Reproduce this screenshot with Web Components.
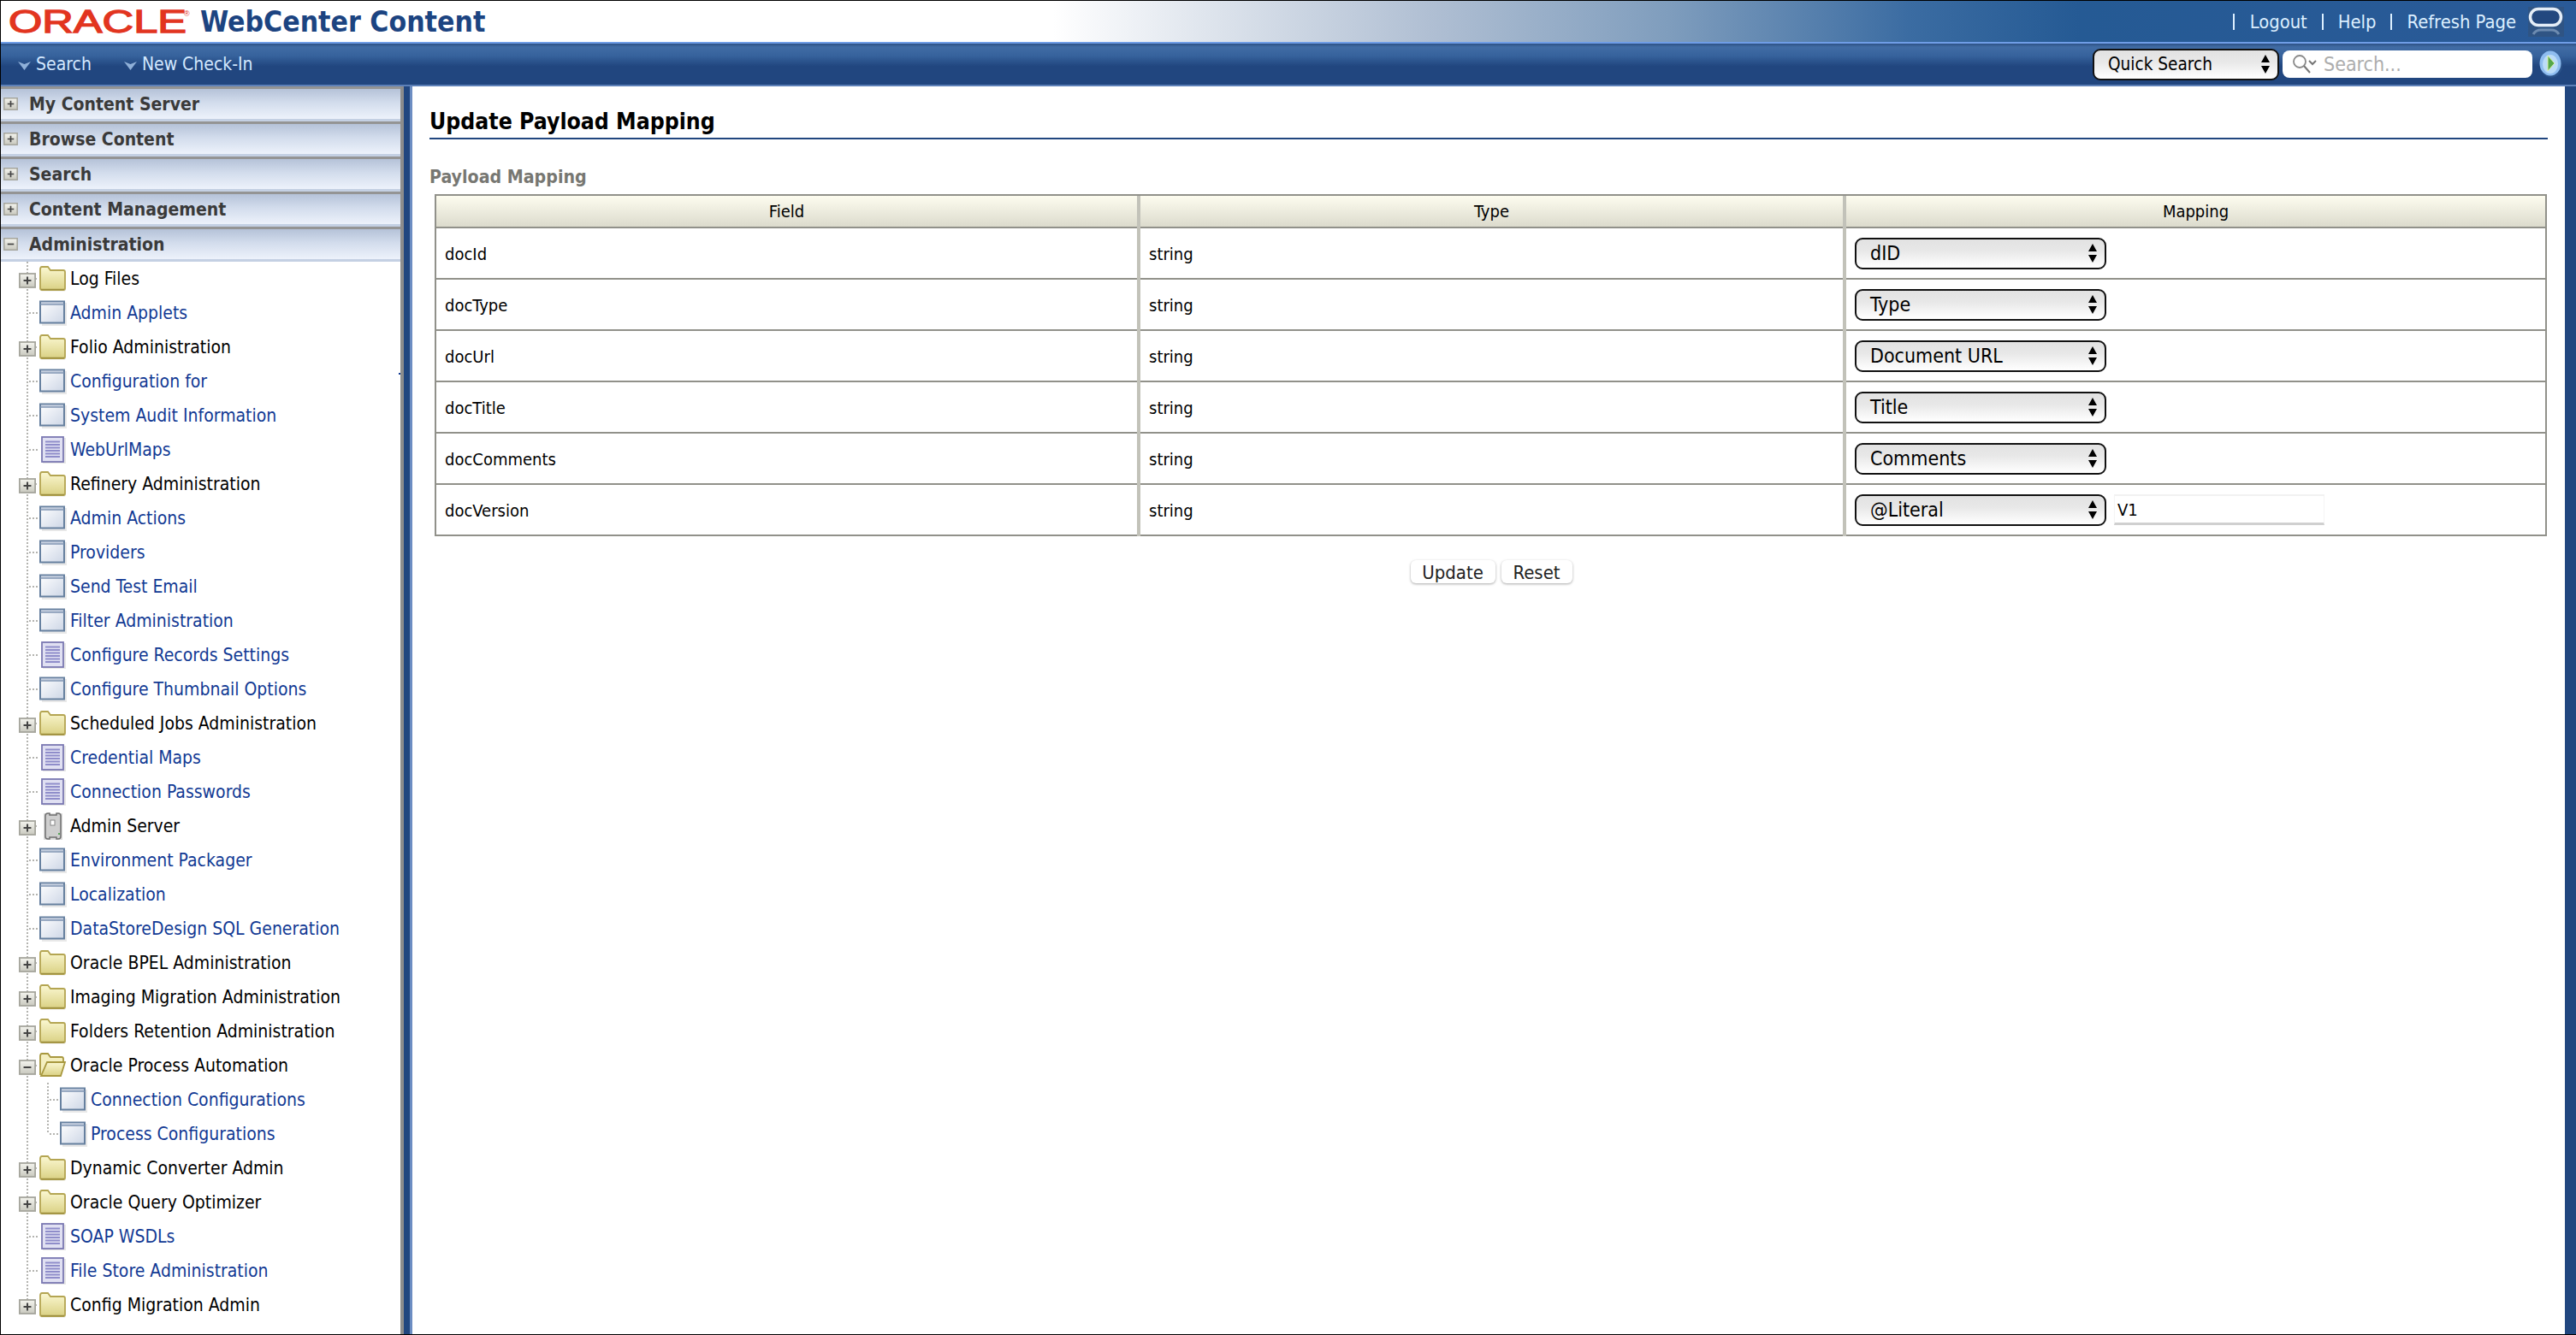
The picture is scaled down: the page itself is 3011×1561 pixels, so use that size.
<!DOCTYPE html>
<html><head><meta charset="utf-8">
<style>
html,body{margin:0;padding:0;height:100%;overflow:hidden;background:#fff}
body{font-family:"DejaVu Sans",sans-serif;font-stretch:condensed}
</style></head>
<body>
<wc-app>
  <wc-topbar slot="top"></wc-topbar>
  <wc-navbar slot="top"></wc-navbar>
  <wc-sidebar slot="side"></wc-sidebar>
  <wc-content slot="main"></wc-content>
</wc-app>
<script>
const FONT='"DejaVu Sans",sans-serif';
function def(name,css,html,setup){
  customElements.define(name,class extends HTMLElement{
    connectedCallback(){
      if(this.shadowRoot)return;
      const r=this.attachShadow({mode:'open'});
      const h=typeof html==='function'?html(this):html;
      r.innerHTML='<style>'+css+'</style>'+h;
      if(setup)setup(r,this);
    }
  });
}
/* App frame */
def('wc-app',`
:host{display:flex;flex-direction:column;height:1561px;box-sizing:border-box;border-top:1px solid #000;border-bottom:1px solid #000;border-left:1px solid #000;background:#21467f;overflow:hidden}
.main{flex:1;display:flex;min-height:0;border-top:2px solid #5d80b8;background:#21467f}
.side{width:471px;flex:none;display:flex}
.main ::slotted([slot=side]){flex:1}
.m{flex:1;margin-left:7px;margin-right:13px;border-left:3px solid #6c8dc2;background:#fff;min-width:0;display:flex}
`,`<slot name="top"></slot><div class="main"><div class="side"><slot name="side"></slot></div><div class="m"><slot name="main"></slot></div></div>`);

/* Top bar */
def('wc-topbar',`
:host{display:flex;align-items:center;height:48px;box-sizing:border-box;background:linear-gradient(90deg,#fff 0,#fff 1230px,#e4e9f0 1380px,#b0bfd3 1670px,#7f9dbd 1950px,#3b6ca2 2230px,#255a94 2430px,#2a5a98 100%);padding-left:8px;flex:none;position:relative}
:host::after{content:"";position:absolute;left:0;right:0;bottom:-2px;height:2px;background:#6f9de6}
svg.o{display:block;width:216px;height:40px;flex:none;overflow:visible}
.t{font:700 33.5px ${FONT};font-stretch:condensed;color:#1c4481;margin-left:9px;margin-top:2px;white-space:nowrap;line-height:1}
.sp{flex:1}
.l{display:flex;align-items:center;font:21.8px ${FONT};font-stretch:condensed;color:#dcefff;white-space:nowrap}
.l i{display:block;width:2px;height:19px;background:#dcefff}
.l span{display:block}
.ic{display:block;width:42px;height:35px;margin:0 14px 0 14px;flex:none}
`,`<svg class="o" viewBox="0 0 216 40"><text x="1" y="33" font-family="Liberation Sans" font-size="37" fill="#e2351f" stroke="#e2351f" stroke-width="1.300" textLength="208" lengthAdjust="spacingAndGlyphs">ORACLE</text><text x="206" y="14" font-family="Liberation Sans" font-size="9" fill="#e2351f">®</text></svg>
<div class="t">WebCenter Content</div><div class="sp"></div>
<div class="l"><i></i><span style="margin-left:18px">Logout</span><i style="margin-left:17px"></i><span style="margin-left:17px">Help</span><i style="margin-left:17px"></i><span style="margin-left:17px">Refresh Page</span></div>
<svg class="ic" viewBox="0 0 42 35"><rect width="42" height="35" fill="#2f5484"/><rect x="2.500" y="2.500" width="36" height="19" rx="9.500" fill="#23487f" stroke="#e4edf7" stroke-width="3.500"/><path d="M6 32q3-5 9-5h12q6 0 9 5" fill="none" stroke="#6d8bb0" stroke-width="3"/></svg>`);

/* Nav */
def('wc-navitem',`:host{display:flex;align-items:center;color:#d3e8ff;font-size:21px;white-space:nowrap}
svg{width:15px;height:10px;margin-right:6px;margin-top:3px}`,`<svg viewBox="0 0 15 10"><path d="M0 0L7.500 10L15 0L7.500 3Z" fill="#8fb0d8"/></svg><slot></slot>`);
def('wc-selectbox',`
:host{display:flex;align-items:center;box-sizing:border-box;height:37px;border:2px solid #111;border-radius:9px;background:linear-gradient(#e2e2e2,#e8e8e8 40%,#fff);color:#000;font-size:23px;padding:0 8px 0 16px;justify-content:space-between;white-space:nowrap;flex:none}
svg{width:12px;height:24px;flex:none}`,`<span><slot></slot></span><svg viewBox="0 0 12 24"><path d="M6 1L11 10H1ZM6 23L1 14H11Z" fill="#000"/></svg>`);
def('wc-searchbox',`
:host{display:flex;align-items:center;box-sizing:border-box;height:32px;width:292px;background:#fff;border-radius:8px;color:#adadad;font-size:23px;padding-left:11px;white-space:nowrap;flex:none}
svg{width:30px;height:24px;margin-right:7px;flex:none}`,`<svg viewBox="0 0 30 24"><circle cx="9" cy="9" r="7" fill="none" stroke="#8a8a8a" stroke-width="1.800"/><path d="M14 14l7 8" stroke="#777" stroke-width="2"/><path d="M20 8l4 4 4-4" fill="none" stroke="#777" stroke-width="2"/></svg><slot></slot>`);
def('wc-navbar',`
:host{display:flex;align-items:center;height:48px;margin-top:2px;flex:none;background:linear-gradient(#2d5185 0,#416ca5 4px,#36629c 30%,#21467f 55%,#21467f);padding-left:20px;box-sizing:border-box}
.sp{flex:1}
wc-selectbox{width:218px;height:37px;font-size:20.6px;padding:0 8px 0 16px}
wc-searchbox{margin-left:4px}
svg{display:block;width:30px;height:36px;margin:2px 14px 0 7px;flex:none}
`,`<wc-navitem>Search</wc-navitem><wc-navitem style="margin-left:38px">New Check-In</wc-navitem><div class="sp"></div>
<wc-selectbox>Quick Search</wc-selectbox><wc-searchbox>Search...</wc-searchbox>
<svg viewBox="0 0 30 36"><ellipse cx="15" cy="18" rx="13" ry="15" fill="#2b5288"/><ellipse cx="14" cy="16" rx="12.500" ry="14.500" fill="#8fbdf0"/><ellipse cx="14" cy="17" rx="9" ry="11" fill="#bcdcf8"/><path d="M11 7L19 16L11 25Z" fill="#55a84a" stroke="#dff0b0"/></svg>`);

/* Sidebar */
const boxSvg=(k,w,h)=>`<svg width="${w}" height="${h}" viewBox="0 0 18 16" style="display:block;flex:none"><defs><linearGradient id="bx" x1="0" y1="0" x2="0" y2="1"><stop offset="0" stop-color="#f4f4ee"/><stop offset="1" stop-color="#c9c9bf"/></linearGradient></defs><rect x=".8" y=".8" width="16.400" height="14.400" fill="url(#bx)" stroke="#a5a59c" stroke-width="1.600"/><path d="${k==='minus'?'M5 8H13':'M5 8H13M9 4V12'}" stroke="#444" stroke-width="1.800"/></svg>`;
def('wc-panelhead',`
:host{display:flex;align-items:center;height:41px;box-sizing:border-box;border-top:3px solid #949494;border-bottom:3px solid #c4d0e3;background:linear-gradient(#b5c2d8,#d2dcec 45%,#edf2fb);color:#3a3a3a;font-weight:700;font-size:21px;padding-left:3px;white-space:nowrap}
span{margin-left:13px}`,
h=>boxSvg(h.getAttribute('k')||'plus',17,15)+`<span><slot></slot></span>`);

const icons={
folder:`<svg width="32" height="32" viewBox="0 0 32 32"><defs><linearGradient id="f" x1="0" y1="0" x2="0" y2="1"><stop offset="0" stop-color="#fbf8d2"/><stop offset="1" stop-color="#dad184"/></linearGradient></defs><path d="M2 30.500h28l1-1.500v-21h-2z" fill="#d5d5cf" opacity=".5"/><path d="M1 5q0-3 2-3h7l3 4h15q2 0 2 2v19q0 2-2 2H3q-2 0-2-2z" fill="url(#f)" stroke="#b4a552" stroke-width="1.800"/><path d="M2 28.500h27" stroke="#9c8e3f" stroke-width="1.500"/></svg>`,
open:`<svg width="32" height="32" viewBox="0 0 32 32"><defs><linearGradient id="g" x1="0" y1="0" x2="0" y2="1"><stop offset="0" stop-color="#fbf8d2"/><stop offset="1" stop-color="#dad184"/></linearGradient></defs><path d="M1 27V5q0-3 2-3h7l3 4h13q2 0 2 2v4" fill="#f4efc0" stroke="#a8983f" stroke-width="1.800"/><path d="M2 28L9 12h21L25 28z" fill="url(#g)" stroke="#a8983f" stroke-width="1.800"/></svg>`,
page:`<svg width="32" height="32" viewBox="0 0 32 32"><defs><linearGradient id="p" x1="0" y1="0" x2="1" y2="1"><stop offset="0" stop-color="#fff"/><stop offset="1" stop-color="#cdd6e6"/></linearGradient></defs><rect x="3" y="4" width="29" height="27" fill="#d9d9d9" opacity=".6"/><rect x="1" y="2.500" width="28" height="25" fill="url(#p)" stroke="#66809f" stroke-width="2"/><path d="M1 6H29" stroke="#7d92b0" stroke-width="1.500"/><path d="M2 4H28" stroke="#b4c1d4" stroke-width="1.500"/></svg>`,
doc:`<svg width="32" height="32" viewBox="0 0 32 32"><rect x="4" y="2" width="27" height="30" fill="#d5d5d5" opacity=".6"/><rect x="3" y="1" width="25" height="29" fill="#e0e0f2" stroke="#7a78b2" stroke-width="1.800"/><path d="M7 6.500H24M7 10H24M7 13.500H24M7 17H24M7 20.500H24M7 24H24" stroke="#8f8dca" stroke-width="2"/></svg>`,
server:`<svg width="32" height="34" viewBox="0 0 32 34"><rect x="5" y="2" width="22" height="31" fill="#ddd"/><path d="M7 5q0-3 3-3h2v2h8V2h2q3 0 3 3v24q0 3-3 3h-2v-2h-8v2h-2q-3 0-3-3z" fill="#cfcfcf" stroke="#6f6f6f" stroke-width="1.500"/><rect x="13" y="10" width="5" height="6" fill="#fff" stroke="#888"/><rect x="22" y="25" width="2" height="2" fill="#5aa85a"/></svg>`
};
const D='stroke="#b4b4b0" stroke-width="2" stroke-dasharray="2 2"';
def('wc-treerow',`
:host{display:flex;align-items:center;height:40px;font-size:21px;white-space:nowrap;color:#000;position:relative}
:host([link]){color:#123a94}
.c{display:block;flex:none}
.i{display:flex;width:32px;height:32px;flex:none;margin-left:1px;align-items:center}
.t{margin-left:4px}
.b{position:absolute;left:21px;top:13px}
.dot{position:absolute;left:465px;top:10px;width:2px;height:2px;background:#123a94}
`,h=>{
  const lvl=+(h.getAttribute('level')||1), x=h.getAttribute('box'), last=h.hasAttribute('last'), sl=h.hasAttribute('sub-last');
  let c='';
  c+=`<line x1="31" y1="0" x2="31" y2="${last?20:40}" ${D}/>`;
  if(lvl===1){ if(!x) c+=`<line x1="33" y1="20" x2="44" y2="20" ${D}/>`; else c+=`<line x1="40" y1="20" x2="45" y2="20" ${D}/>`; }
  else { c+=`<line x1="55" y1="0" x2="55" y2="${sl?20:40}" ${D}/><line x1="57" y1="20" x2="68" y2="20" ${D}/>`; }
  const W=lvl===1?44:68;
  return `<svg class="c" width="${W}" height="40">${c}</svg>`+(x?`<div class="b">${boxSvg(x,20,18)}</div>`:'')+`<div class="i">${icons[h.getAttribute('k')]}</div><div class="t"><slot></slot></div>`+(h.hasAttribute('dot')?'<div class="dot"></div>':'');
});
const tree=[
['folder','Log Files','plus'],['page','Admin Applets'],['folder','Folio Administration','plus'],['page','Configuration for',null,'dot'],['page','System Audit Information'],['doc','WebUrlMaps'],['folder','Refinery Administration','plus'],['page','Admin Actions'],['page','Providers'],['page','Send Test Email'],['page','Filter Administration'],['doc','Configure Records Settings'],['page','Configure Thumbnail Options'],['folder','Scheduled Jobs Administration','plus'],['doc','Credential Maps'],['doc','Connection Passwords'],['server','Admin Server','plus'],['page','Environment Packager'],['page','Localization'],['page','DataStoreDesign SQL Generation'],['folder','Oracle BPEL Administration','plus'],['folder','Imaging Migration Administration','plus'],['folder','Folders Retention Administration','plus'],['open','Oracle Process Automation','minus'],['page','Connection Configurations',null,'sub'],['page','Process Configurations',null,'sublast'],['folder','Dynamic Converter Admin','plus'],['folder','Oracle Query Optimizer','plus'],['doc','SOAP WSDLs'],['doc','File Store Administration'],['folder','Config Migration Admin','plus','last']];
def('wc-sidebar',`
:host{display:block;box-sizing:border-box;border-right:4px solid #8c8c8c;background:#fff;color:#000;overflow:hidden}
`,()=>['My Content Server','Browse Content','Search','Content Management'].map(t=>`<wc-panelhead>${t}</wc-panelhead>`).join('')+`<wc-panelhead k="minus">Administration</wc-panelhead>`+
tree.map(([k,t,b,f])=>{
 const isLink=!(k==='folder'||k==='open'||k==='server');
 return `<wc-treerow k="${k}"${b?` box="${b}"`:''}${isLink?' link':''}${f==='sub'?' level="2"':''}${f==='sublast'?' level="2" sub-last':''}${f==='last'?' last':''}${f==='dot'?' dot':''}>${t}</wc-treerow>`}).join(''));

/* Content */
def('wc-maphead',`:host{display:block;font-size:20px;text-align:center;line-height:37px;height:36px;background:linear-gradient(#fdfcef,#dcdbcd);color:#000;border-bottom:2px solid #91918a}`,`<slot></slot>`);
def('wc-cell',`:host{display:flex;align-items:center;height:58px;border-bottom:2px solid #91918a;font-size:20px;padding-left:10px;box-sizing:content-box;color:#000;white-space:nowrap;gap:9px}`,`<slot></slot>`);
def('wc-literal',`:host{display:flex;align-items:center;box-sizing:border-box;width:246px;height:36px;border-top:2px solid #f2f2f2;border-bottom:3px solid #d0d0d0;border-left:1px solid #f4f4f4;border-right:1px solid #f4f4f4;font-size:20px;padding-left:3px;color:#000}`,`<slot></slot>`);
def('wc-button',`:host{display:flex;align-items:center;justify-content:center;box-sizing:border-box;height:27px;padding-top:2px;border-radius:6px;background:#fff;box-shadow:0 1px 3px rgba(0,0,0,.35);font-size:22px;color:#222;white-space:nowrap}`,`<slot></slot>`);
const rows=[['docId','dID'],['docType','Type'],['docUrl','Document URL'],['docTitle','Title'],['docComments','Comments'],['docVersion','@Literal','V1']];
def('wc-maptable',`
:host{display:grid;grid-template-columns:819px 821px 1fr;column-gap:4px;border:2px solid #91918a;border-bottom:0;background:#c2c2b9;margin:0 1px 0 6px;flex:none}
wc-cell{background-color:#fff}
wc-selectbox{width:294px}
.tx{position:relative;top:1px}
`,()=>`<wc-maphead>Field</wc-maphead><wc-maphead>Type</wc-maphead><wc-maphead>Mapping</wc-maphead>`+rows.map(r=>`<wc-cell><span class="tx">${r[0]}</span></wc-cell><wc-cell><span class="tx">string</span></wc-cell><wc-cell><wc-selectbox>${r[1]}</wc-selectbox>${r[2]?`<wc-literal>${r[2]}</wc-literal>`:''}</wc-cell>`).join(''));
def('wc-content',`
:host{display:flex;flex-direction:column;flex:1;min-width:0;padding:0 20px 0 20px;box-sizing:border-box;background:#fff;color:#000}
h1{margin:0;font-size:26.4px;font-weight:700;line-height:1;padding-top:28px;height:62px;box-sizing:border-box;border-bottom:2px solid #21467f;font-stretch:condensed}
h2{margin:0;font-size:21.2px;font-weight:700;color:#777772;line-height:24px;padding-top:32px;height:64px;box-sizing:border-box;font-stretch:condensed}
.btns{display:flex;justify-content:center;gap:7px;margin-top:28px;margin-left:6px}
`,`<h1>Update Payload Mapping</h1><h2>Payload Mapping</h2><wc-maptable></wc-maptable><div class="btns"><wc-button style="width:99px">Update</wc-button><wc-button style="width:83px">Reset</wc-button></div>`);
</script>
</body></html>
